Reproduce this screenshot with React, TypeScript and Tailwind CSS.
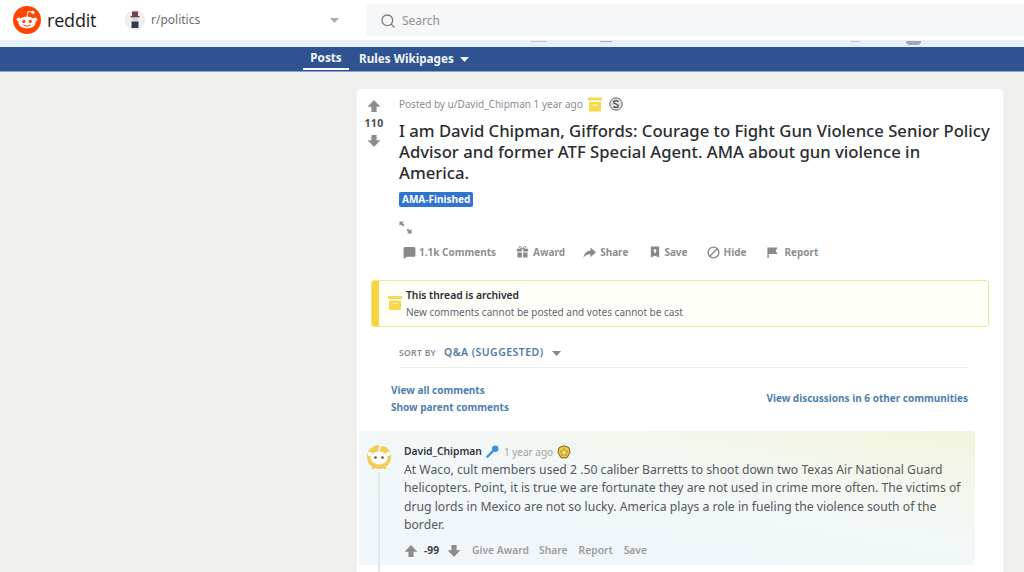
import { Search, MessageSquare } from "lucide-react";

const FONT = "font-['Noto_Sans',sans-serif]";

const Up = ({ size = 14 }: { size?: number }) => (
  <svg width={size} height={size} viewBox="0 0 14 14" className="text-[#8a8d90]" fill="currentColor">
    <path d="M7 1 L13.4 7.8 H9.6 V13 H4.4 V7.8 H0.6 Z" />
  </svg>
);

const Down = ({ size = 14 }: { size?: number }) => (
  <svg width={size} height={size} viewBox="0 0 14 14" className="text-[#8a8d90]" fill="currentColor">
    <path d="M7 13 L13.4 6.2 H9.6 V1 H4.4 V6.2 H0.6 Z" />
  </svg>
);

const Caret = ({ className }: { className: string }) => (
  <svg width="9" height="5" viewBox="0 0 9 5" className={className} fill="currentColor">
    <path d="M0 0 H9 L4.5 5 Z" />
  </svg>
);

const ArchiveIcon = ({ w, h }: { w: number; h: number }) => (
  <svg width={w} height={h} viewBox="0 0 14 14" fill="#f7d94c">
    <rect x="0" y="0" width="14" height="3" />
    <path d="M1 4.5 H13 V13 Q13 14 12 14 H2 Q1 14 1 13 Z" />
    <rect x="4.5" y="7" width="5" height="1" fill="#fff6c4" />
  </svg>
);

const Snoo = () => (
  <svg width="28" height="28" viewBox="0 0 28 28">
    <circle cx="14" cy="14" r="14" fill="#ff4500" />
    <ellipse cx="14" cy="16.5" rx="8.6" ry="6" fill="#fff" />
    <circle cx="5.8" cy="13.6" r="2.1" fill="#fff" />
    <circle cx="22.2" cy="13.6" r="2.1" fill="#fff" />
    <circle cx="10.8" cy="15.4" r="1.6" fill="#ff4500" />
    <circle cx="17.2" cy="15.4" r="1.6" fill="#ff4500" />
    <path d="M10.4 19 Q14 21.6 17.6 19" stroke="#ff4500" strokeWidth="1" fill="none" />
    <path d="M14 10.5 L15.2 5.4 L19.4 6.2" stroke="#fff" strokeWidth="1" fill="none" />
    <circle cx="20" cy="6.4" r="1.6" fill="#fff" />
  </svg>
);

const SubIcon = () => (
  <svg width="20" height="20" viewBox="0 0 20 20">
    <circle cx="10" cy="10" r="9.5" fill="#f2f0ee" stroke="#d5d5d5" strokeWidth="0.5" />
    <rect x="7" y="1.5" width="6" height="5" fill="#7a3f4a" />
    <rect x="5.5" y="6" width="9" height="1.4" fill="#5c4a55" />
    <rect x="7" y="8" width="6" height="3.5" fill="#e9d6c8" />
    <path d="M6.5 11.5 H13.5 V18 H6.5 Z" fill="#2e3a52" />
  </svg>
);

const SilverBadge = () => (
  <svg width="14" height="14" viewBox="0 0 14 14">
    <circle cx="7" cy="7" r="6.2" fill="#e2e2e2" stroke="#666" strokeWidth="1" />
    <path d="M9.6 4.4 Q7 2.8 5 4.2 Q3.9 6 7 7 Q10 8 9 9.7 Q7 11.2 4.4 9.6" fill="none" stroke="#444" strokeWidth="1.3" />
  </svg>
);

const ExpandIcon = () => (
  <svg width="13" height="13" viewBox="0 0 14 14" fill="#8a8d90">
    <path d="M0.5 0.5 H5.4 L3.8 2.1 L6 4.3 L4.3 6 L2.1 3.8 L0.5 5.4 Z" />
    <path d="M13.5 13.5 H8.6 L10.2 11.9 L8 9.7 L9.7 8 L11.9 10.2 L13.5 8.6 Z" />
  </svg>
);

const GiftIcon = () => (
  <svg width="13" height="14" viewBox="0 0 14 14" fill="#878a8c">
    <path d="M1 3.5 H6.3 V6.5 H1 Z M7.7 3.5 H13 V6.5 H7.7 Z M1.6 7.6 H6.3 V13 H1.6 Z M7.7 7.6 H12.4 V13 H7.7 Z" />
    <path d="M7 3.5 C5 0 2.8 0.8 3.6 2.4 C4 3.2 5.6 3.4 7 3.5 C8.4 3.4 10 3.2 10.4 2.4 C11.2 0.8 9 0 7 3.5 Z" fill="none" stroke="#878a8c" strokeWidth="1" />
  </svg>
);

const ShareIcon = () => (
  <svg width="13" height="13" viewBox="0 0 14 14" fill="#878a8c">
    <path d="M8 1.5 L14 6.8 L8 12 V8.8 C4.6 8.8 2.2 10 0.5 12.6 C1 8.2 3.6 5.2 8 4.8 Z" />
  </svg>
);

const SaveIcon = () => (
  <svg width="10" height="14" viewBox="0 0 12 14" fill="#878a8c">
    <path fillRule="evenodd" d="M1 0.5 H11 V13.5 L6 11.4 L1 13.5 Z M6 3.2 L3.8 5.6 H5 V8 H7 V5.6 H8.2 Z" />
  </svg>
);

const HideIcon = () => (
  <svg width="13" height="13" viewBox="0 0 14 14" fill="none" stroke="#878a8c" strokeWidth="1.5">
    <circle cx="7" cy="7" r="5.8" />
    <path d="M3 11 L11 3" />
  </svg>
);

const FlagIcon = () => (
  <svg width="13" height="13" viewBox="0 0 14 14" fill="#878a8c">
    <path d="M1.5 1.5 H12.5 L10.4 5 L12.5 8.5 H3 V13 H1.5 Z" />
  </svg>
);

const Action = ({ icon, label, gap }: { icon: React.ReactNode; label: string; gap: string }) => (
  <div className={`flex items-center ${gap}`}>
    {icon}
    <span className="text-[10px] font-bold text-[#8c8f92]">{label}</span>
  </div>
);

export default function App() {
  return (
    <div className={`${FONT} h-[572px] w-[1024px] overflow-hidden bg-[#efefed]`}>
      {/* top bar */}
      <header className="flex h-10 items-center bg-white">
        <div className="flex w-[110px] items-center pl-[13px]">
          <Snoo />
          <span className="ml-[6px] font-['Open_Sans',sans-serif] text-[18px] leading-none font-medium tracking-[-0.2px] text-[#1c1c1c]">
            reddit
          </span>
        </div>
        <div className="ml-[15px] flex w-[214px] items-center">
          <SubIcon />
          <span className="ml-[6px] text-[12px] text-[#6a6e72]">r/politics</span>
          <Caret className="ml-auto text-[#a9acae]" />
        </div>
        <div className="ml-[27px] flex h-8 flex-1 items-center rounded-l bg-[#f6f7f8] pt-[1px] pl-[14px]">
          <Search size={16} strokeWidth={2} className="text-[#7c7c7c]" />
          <span className="ml-[6px] text-[12px] text-[#8e9092]">Search</span>
        </div>
      </header>

      {/* stray bits of the scrolled banner show through here */}
      <div className="relative h-[7px] bg-[#e4f1fa]">
        <span className="absolute top-[1px] left-[531px] h-[1px] w-[16px] bg-[#c4c8cc]" />
        <span className="absolute top-[1px] left-[600px] h-[1px] w-[12px] bg-[#a9adb1]" />
        <span className="absolute top-[1px] left-[851px] h-[1px] w-[9px] bg-[#c4c8cc]" />
        <span className="absolute top-[1px] left-[906px] h-[4px] w-[15px] rounded-b bg-[#a3a8ad]" />
      </div>

      {/* subreddit nav */}
      <nav className="flex h-[25px] items-stretch border-b border-[#8aa3c8] bg-[#2e5390] pl-[303px] text-[11.7px] font-bold text-[#f2f5fa]">
        <div className="mb-[1px] flex w-[46px] items-center justify-center border-b-2 border-white pt-[1px]">Posts</div>
        <div className="ml-[10px] flex items-center">Rules Wikipages</div>
        <div className="ml-[6px] flex items-center">
          <Caret className="text-[#f2f5fa]" />
        </div>
      </nav>

      {/* post card */}
      <main className="mt-[17px] ml-[357px] h-[500px] w-[646px] rounded-t bg-white">
        <div className="flex">
          <div className="flex w-[42px] shrink-0 flex-col items-center pt-[10px] pr-[8px]">
            <Up />
            <span className="mt-[3px] text-[10.5px] leading-[14px] font-bold tracking-[0.4px] text-[#4a4d50]">110</span>
            <div className="mt-[4px]">
              <Down />
            </div>
          </div>
          <div className="w-[596px] pt-[7px]">
            <div className="flex h-4 items-center text-[10px] text-[#8a8d90]">
              <span>Posted by u/David_Chipman 1 year ago</span>
              <span className="ml-[5px]">
                <ArchiveIcon w={14} h={15} />
              </span>
              <span className="ml-[7px]">
                <SilverBadge />
              </span>
            </div>
            <h1 className="mt-[8px] text-[16.68px] leading-[21px] font-medium text-[#2a2d30]">
              I am David Chipman, Giffords: Courage to Fight Gun Violence Senior Policy
              <br />
              Advisor and former ATF Special Agent. AMA about gun violence in
              <br />
              America.
            </h1>
            <div className="mt-[9px] flex">
              <span className="flex h-[15px] items-center rounded-[2px] bg-[#2f74d0] px-[3px] text-[10px] font-bold text-white">
                AMA-Finished
              </span>
            </div>
            <div className="mt-[14px] h-[13px]">
              <ExpandIcon />
            </div>
            <div className="mt-[11px] flex h-[14px] items-center pl-[4px]">
              <Action
                gap="gap-[3px]"
                icon={<MessageSquare size={13} fill="#878a8c" stroke="#878a8c" />}
                label="1.1k Comments"
              />
              <div className="ml-[20px]">
                <Action gap="gap-[4px]" icon={<GiftIcon />} label="Award" />
              </div>
              <div className="ml-[18px]">
                <Action gap="gap-[4px]" icon={<ShareIcon />} label="Share" />
              </div>
              <div className="ml-[22px]">
                <Action gap="gap-[4px]" icon={<SaveIcon />} label="Save" />
              </div>
              <div className="ml-[19px]">
                <Action gap="gap-[4px]" icon={<HideIcon />} label="Hide" />
              </div>
              <div className="ml-[19px]">
                <Action gap="gap-[6px]" icon={<FlagIcon />} label="Report" />
              </div>
            </div>
          </div>
        </div>

        {/* archived notice */}
        <div className="mt-[21px] ml-[14px] flex h-[47px] w-[618px] overflow-hidden rounded-[3px] border border-[#f2e68a] bg-[#fffffa]">
          <div className="-my-[1px] -ml-[1px] w-2 shrink-0 bg-[#f7d33f]" />
          <div className="mt-[15px] ml-[9px]">
            <ArchiveIcon w={14} h={14} />
          </div>
          <div className="ml-[4px] pt-[7px]">
            <div className="text-[10.3px] leading-[15px] font-semibold text-[#2a2c2e]">This thread is archived</div>
            <div className="mt-[2px] text-[10px] leading-[15px] text-[#63666a]">
              New comments cannot be posted and votes cannot be cast
            </div>
          </div>
        </div>

        {/* sort */}
        <div className="mt-[12px] ml-[42px] flex h-[29px] w-[569px] items-center border-b border-[#eeeeee]">
          <span className="text-[8.5px] font-semibold tracking-[0.35px] text-[#85888b]">SORT BY</span>
          <span className="ml-[8px] text-[10.5px] font-semibold tracking-[0.45px] text-[#4f7ba8]">Q&amp;A (SUGGESTED)</span>
          <Caret className="ml-[8px] text-[#85888b]" />
        </div>

        {/* links */}
        <div className="mt-[15px] ml-[34px] flex w-[577px] items-center justify-between text-[10px] font-bold text-[#4d7fae]">
          <div className="flex flex-col gap-[3px] leading-[14px]">
            <span>View all comments</span>
            <span>Show parent comments</span>
          </div>
          <span>View discussions in 6 other communities</span>
        </div>

        {/* comment */}
        <div className="mt-[17px] ml-[2px] flex h-[134px] w-[616px] rounded-[3px] bg-[linear-gradient(190deg,#f2f5dc_0%,#f3f7ee_28%,#f2f7fa_50%,#f1f6fb_100%)]">
          <div className="flex h-full w-[45px] shrink-0 flex-col items-center pt-[12px] pr-[6px]">
            <svg width="26" height="27" viewBox="0 0 26 27">
              <circle cx="13" cy="14" r="12" fill="#f1ce58" />
              <ellipse cx="13" cy="15" rx="8.5" ry="6.5" fill="#fff" />
              <circle cx="3.8" cy="11" r="2.2" fill="#fff" />
              <circle cx="22.2" cy="11" r="2.2" fill="#fff" />
              <circle cx="9.5" cy="14.5" r="1.3" fill="#57595b" />
              <circle cx="16.5" cy="14.5" r="1.3" fill="#57595b" />
              <path d="M13 8.5 L14 2.5 H18" stroke="#fff" strokeWidth="1.4" fill="none" />
              <path d="M8 24 L6 26 M18 24 L20 26" stroke="#f1ce58" strokeWidth="2" />
            </svg>
            <div className="mt-[2px] -mb-[10px] w-[2px] flex-1 bg-[#e5e8ea]" />
          </div>
          <div className="pt-[13px]">
            <div className="flex h-4 items-center">
              <span className="text-[10.3px] font-semibold text-[#33363a]">David_Chipman</span>
              <svg width="14" height="14" viewBox="0 0 13 13" className="ml-[3px]">
                <circle cx="9.5" cy="3.5" r="3" fill="#3e8fe0" />
                <path d="M7 4.4 L8.6 6 L2.4 12.4 L0.8 10.8 Z" fill="#3e8fe0" />
              </svg>
              <span className="ml-[5px] text-[10px] text-[#a0a3a6]">1 year ago</span>
              <svg width="14" height="14" viewBox="0 0 14 14" className="ml-[4px]">
                <path d="M7 0.8 L12 2.6 L13 7.6 L10 12.8 H4 L1 7.6 L2 2.6 Z" fill="#f0c93f" stroke="#7a5f20" strokeWidth="1" />
                <path d="M7 3.6 L8.2 6.2 L10.8 6.4 L8.8 8.2 L9.4 10.8 L7 9.4 L4.6 10.8 L5.2 8.2 L3.2 6.4 L5.8 6.2 Z" fill="#fbe68a" stroke="#7a5f20" strokeWidth="0.5" />
              </svg>
            </div>
            <p className="mt-[1px] w-[566px] text-[12.2px] leading-[18.3px] text-[#55585c]">
              At Waco, cult members used 2 .50 caliber Barretts to shoot down two Texas Air National Guard
              <br />
              helicopters. Point, it is true we are fortunate they are not used in crime more often. The victims of
              <br />
              drug lords in Mexico are not so lucky. America plays a role in fueling the violence south of the
              <br />
              border.
            </p>
            <div className="mt-[10px] flex h-[14px] items-center text-[10.3px] font-semibold text-[#9a9da0]">
              <Up size={14} />
              <span className="ml-[6px] font-bold text-[#3b3e41]">-99</span>
              <span className="ml-[8px]">
                <Down size={14} />
              </span>
              <span className="ml-[11px]">Give Award</span>
              <span className="ml-[10px]">Share</span>
              <span className="ml-[11px]">Report</span>
              <span className="ml-[11px]">Save</span>
            </div>
          </div>
        </div>
      </main>
    </div>
  );
}
